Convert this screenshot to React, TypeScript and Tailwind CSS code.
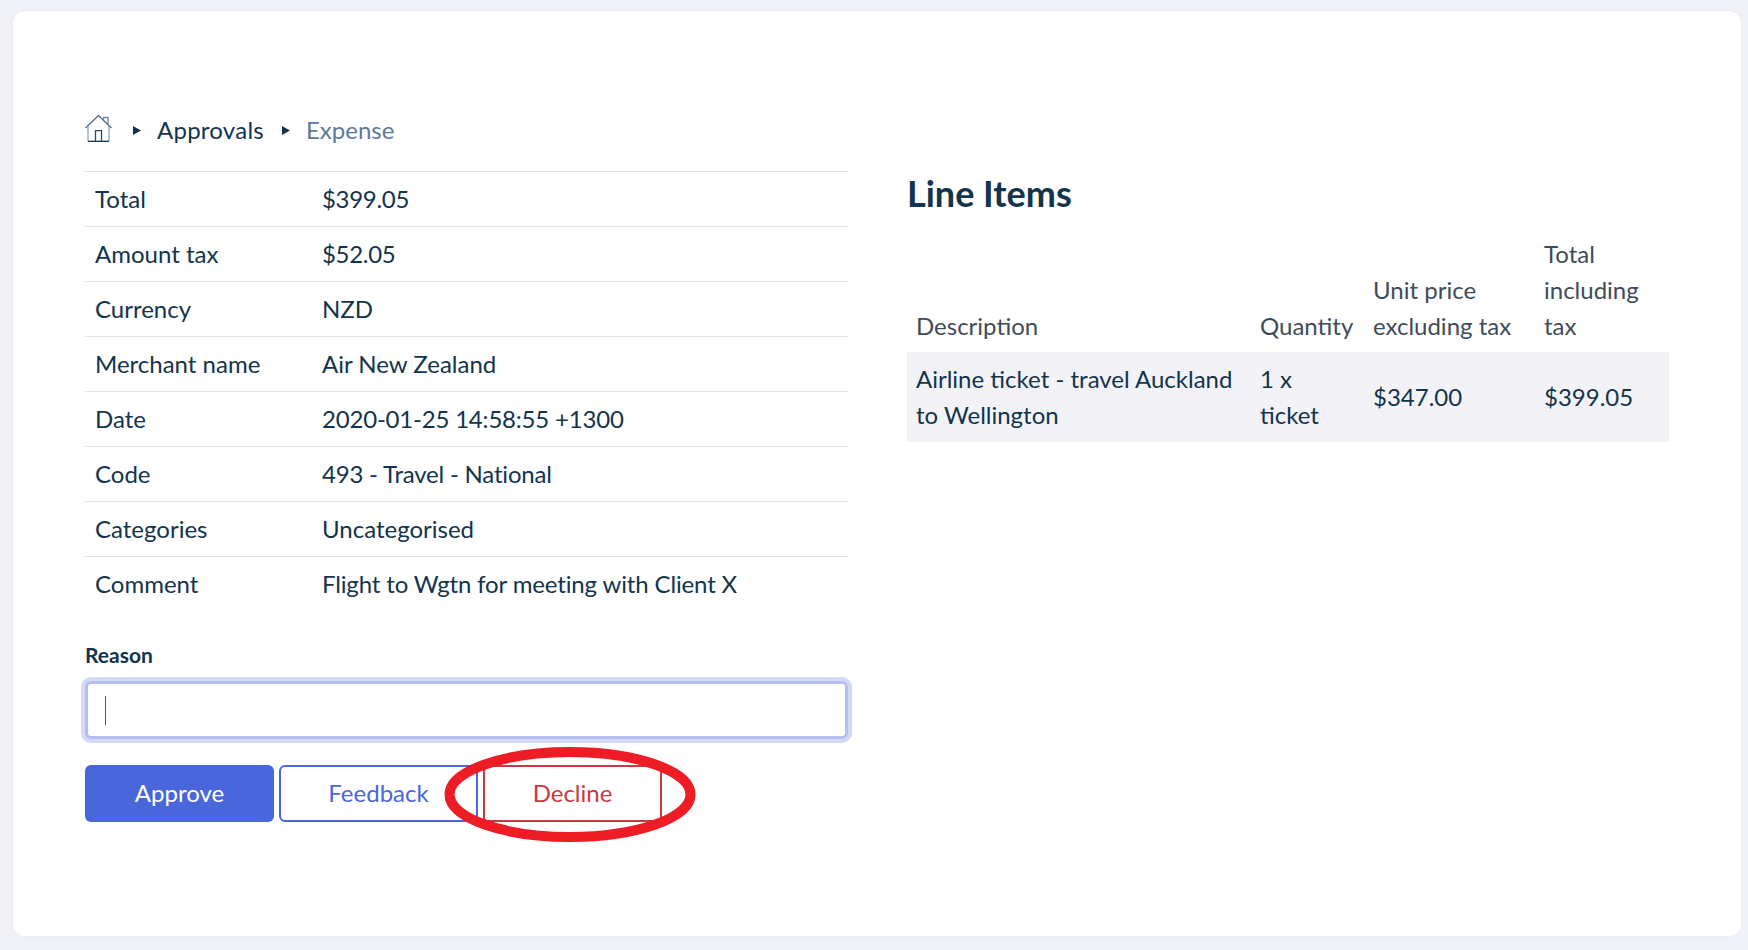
import React from 'react';

const details = [
  { label: 'Total', value: '$399.05', tracking: 'tracking-[-0.3px]' },
  { label: 'Amount tax', value: '$52.05', tracking: 'tracking-[-0.3px]' },
  { label: 'Currency', value: 'NZD', tracking: '' },
  { label: 'Merchant name', value: 'Air New Zealand', tracking: '' },
  { label: 'Date', value: '2020-01-25 14:58:55 +1300', tracking: 'tracking-[-0.2px]' },
  { label: 'Code', value: '493 - Travel - National', tracking: 'tracking-[-0.2px]' },
  { label: 'Categories', value: 'Uncategorised', tracking: '' },
  { label: 'Comment', value: 'Flight to Wgtn for meeting with Client X', tracking: 'tracking-[-0.14px]' },
];

// Breadcrumb separator
const Caret = ({ className }: { className: string }) => (
  <svg width="8" height="9" viewBox="0 0 8 9" className={`shrink-0 ${className}`}>
    <path d="M0 0 L8 4.5 L0 9 Z" fill="#12344d" />
  </svg>
);

const HomeIcon = () => (
  <svg width="27" height="27" viewBox="0 0 27 27" fill="none" strokeWidth="1.3" className="mb-[3px] shrink-0">
    <path d="M0.5 13 L13.5 0.5 L26.5 13" stroke="#4f6c85" />
    <path d="M18.5 5 V2.5 H23 V9.5" stroke="#6f879b" />
    <path d="M3 11 V26.5" stroke="#8fa2b3" />
    <path d="M24 11 V26.5" stroke="#8fa2b3" />
    <path d="M3 26.3 H24" stroke="#12344d" />
    <path d="M10.5 26 V15.7 H16.5 V26" stroke="#2a4a63" />
  </svg>
);

export default function App() {
  return (
    <div className="min-h-[950px] bg-[#f1f2f8] pl-[13px] pr-[7px] pt-[11px] font-['Lato',sans-serif] text-[24px] leading-[36px] text-[#12344d]">
      <div className="h-[925px] rounded-[12px] bg-white pl-[72px] pt-[101px] shadow-[0_0_4px_rgba(0,0,0,0.04)]">
        <div className="grid grid-cols-[763px_763px] gap-x-[59px]">
          <div>
            <nav className="flex h-[36px] items-center">
              <HomeIcon />
              <Caret className="ml-[21px] mr-[16px]" />
              <span className="tracking-[0.25px]">Approvals</span>
              <Caret className="ml-[18px] mr-[16px]" />
              <span className="text-[#5d7a98]">Expense</span>
            </nav>
            <table className="mt-[23px] w-full border-collapse">
              <tbody>
                {details.map(({ label, value, tracking }) => (
                  <tr key={label} className="border-t border-[#e2e5e8]">
                    <td className="w-[227px] px-[10px] py-[9px]">{label}</td>
                    <td className={`px-[10px] py-[9px] ${tracking}`}>{value}</td>
                  </tr>
                ))}
              </tbody>
            </table>
            <label className="mt-[29px] block text-[21px] font-bold leading-[30px]">Reason</label>
            <div className="mt-[11px] flex h-[58px] items-center rounded-[6px] border-[3px] border-[#b5bfef] bg-white pl-[17px] shadow-[0_0_0_4px_#d3daf6]">
              <span className="h-[29px] w-px bg-[#4a5560]" />
            </div>
            <div className="relative mt-[26px] flex">
              <button className="h-[57px] w-[189px] rounded-[6px] bg-[#4a66db] pb-[2px] text-white">Approve</button>
              <button className="ml-[5px] h-[57px] w-[199px] rounded-[6px] border-2 border-[#4a66db] bg-white pb-[2px] text-[#4a66db]">Feedback</button>
              <button className="ml-[5px] h-[57px] w-[179px] rounded-[4px] border-2 border-[#c83a3f] bg-white pb-[2px] text-[#c83a3f]">Decline</button>
              {/* Red marker ring drawn on the screenshot */}
              <svg width="252" height="95" viewBox="0 0 252 95" fill="none" className="pointer-events-none absolute left-[359px] top-[-18px]">
                <ellipse cx="126" cy="47.5" rx="120.5" ry="42.5" stroke="#ee1c25" strokeWidth="10" />
              </svg>
            </div>
          </div>
          <div>
            <h2 className="mt-[57px] text-[36px] font-bold leading-[48px]">Line Items</h2>
            <table className="mt-[10px] w-[762px] border-collapse">
              <thead>
                <tr className="text-left align-bottom text-[#3e4c59]">
                  <th className="w-[344px] px-[9px] pb-[8px] pt-[9px] font-normal">Description</th>
                  <th className="w-[113px] px-[9px] pb-[8px] pt-[9px] font-normal">Quantity</th>
                  <th className="w-[171px] px-[9px] pb-[8px] pt-[9px] font-normal">Unit price excluding tax</th>
                  <th className="px-[9px] pb-[8px] pt-[9px] font-normal">Total including tax</th>
                </tr>
              </thead>
              <tbody>
                <tr className="bg-[#f3f3f7]">
                  <td className="px-[9px] py-[9px]">Airline ticket - travel Auckland to Wellington</td>
                  <td className="px-[9px] py-[9px]">1 x ticket</td>
                  <td className="px-[9px] py-[9px]">$347.00</td>
                  <td className="px-[9px] py-[9px]">$399.05</td>
                </tr>
              </tbody>
            </table>
          </div>
        </div>
      </div>
    </div>
  );
}
